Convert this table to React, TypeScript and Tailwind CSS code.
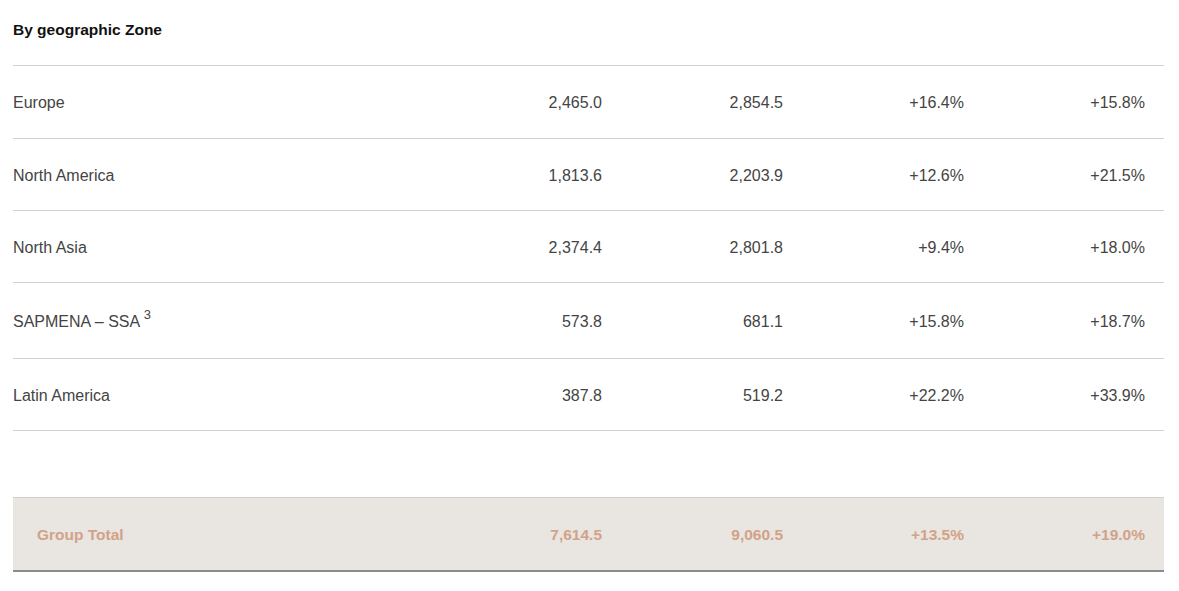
import React from "react";

const rows: { name: React.ReactNode; a: string; b: string; c: string; d: string; tall?: boolean }[] = [
  { name: "Europe", a: "2,465.0", b: "2,854.5", c: "+16.4%", d: "+15.8%" },
  { name: "North America", a: "1,813.6", b: "2,203.9", c: "+12.6%", d: "+21.5%" },
  { name: "North Asia", a: "2,374.4", b: "2,801.8", c: "+9.4%", d: "+18.0%" },
  {
    name: (
      <>
        SAPMENA – SSA{" "}
        <span className="inline-block text-[13px] leading-none align-top relative -top-[4px]">3</span>
      </>
    ),
    a: "573.8",
    b: "681.1",
    c: "+15.8%",
    d: "+18.7%",
    tall: true,
  },
  { name: "Latin America", a: "387.8", b: "519.2", c: "+22.2%", d: "+33.9%" },
];

export default function App() {
  return (
    <div className="w-[1179px] h-[591px] bg-white font-['Liberation_Sans',Arial,sans-serif] text-[#444]">
      <div className="pl-[13px] w-[1164px]">
        <div className="h-[66px] pt-[20px] text-[15.5px] font-bold text-[#111] leading-[20px] border-b border-[#d2d2d2]">
          By geographic Zone
        </div>
        {rows.map((r, i) => (
          <div
            key={i}
            className={`flex items-center border-b border-[#d2d2d2] text-[16px] leading-[20px] ${r.tall ? "h-[76px] pt-[3px]" : i === 0 ? "h-[73px] pt-[2px]" : "h-[72px] pt-[2px]"}`}
          >
            <div className="w-[427px]">{r.name}</div>
            <div className="w-[181px] text-right pr-[19px]">{r.a}</div>
            <div className="w-[181px] text-right pr-[19px]">{r.b}</div>
            <div className="w-[181px] text-right pr-[19px]">{r.c}</div>
            <div className="w-[181px] text-right pr-[19px]">{r.d}</div>
          </div>
        ))}
        <div className="h-[66px]" />
        <div className="flex items-center h-[75px] pt-[1px] bg-[#e9e5e0] border-t border-[#cfcfcf] border-b-2 border-b-[#8c8c8c] text-[15.5px] font-bold text-[#d2a288]">
          <div className="w-[427px] pl-[24px]">Group Total</div>
          <div className="w-[181px] text-right pr-[19px]">7,614.5</div>
          <div className="w-[181px] text-right pr-[19px]">9,060.5</div>
          <div className="w-[181px] text-right pr-[19px]">+13.5%</div>
          <div className="w-[181px] text-right pr-[19px]">+19.0%</div>
        </div>
      </div>
    </div>
  );
}
